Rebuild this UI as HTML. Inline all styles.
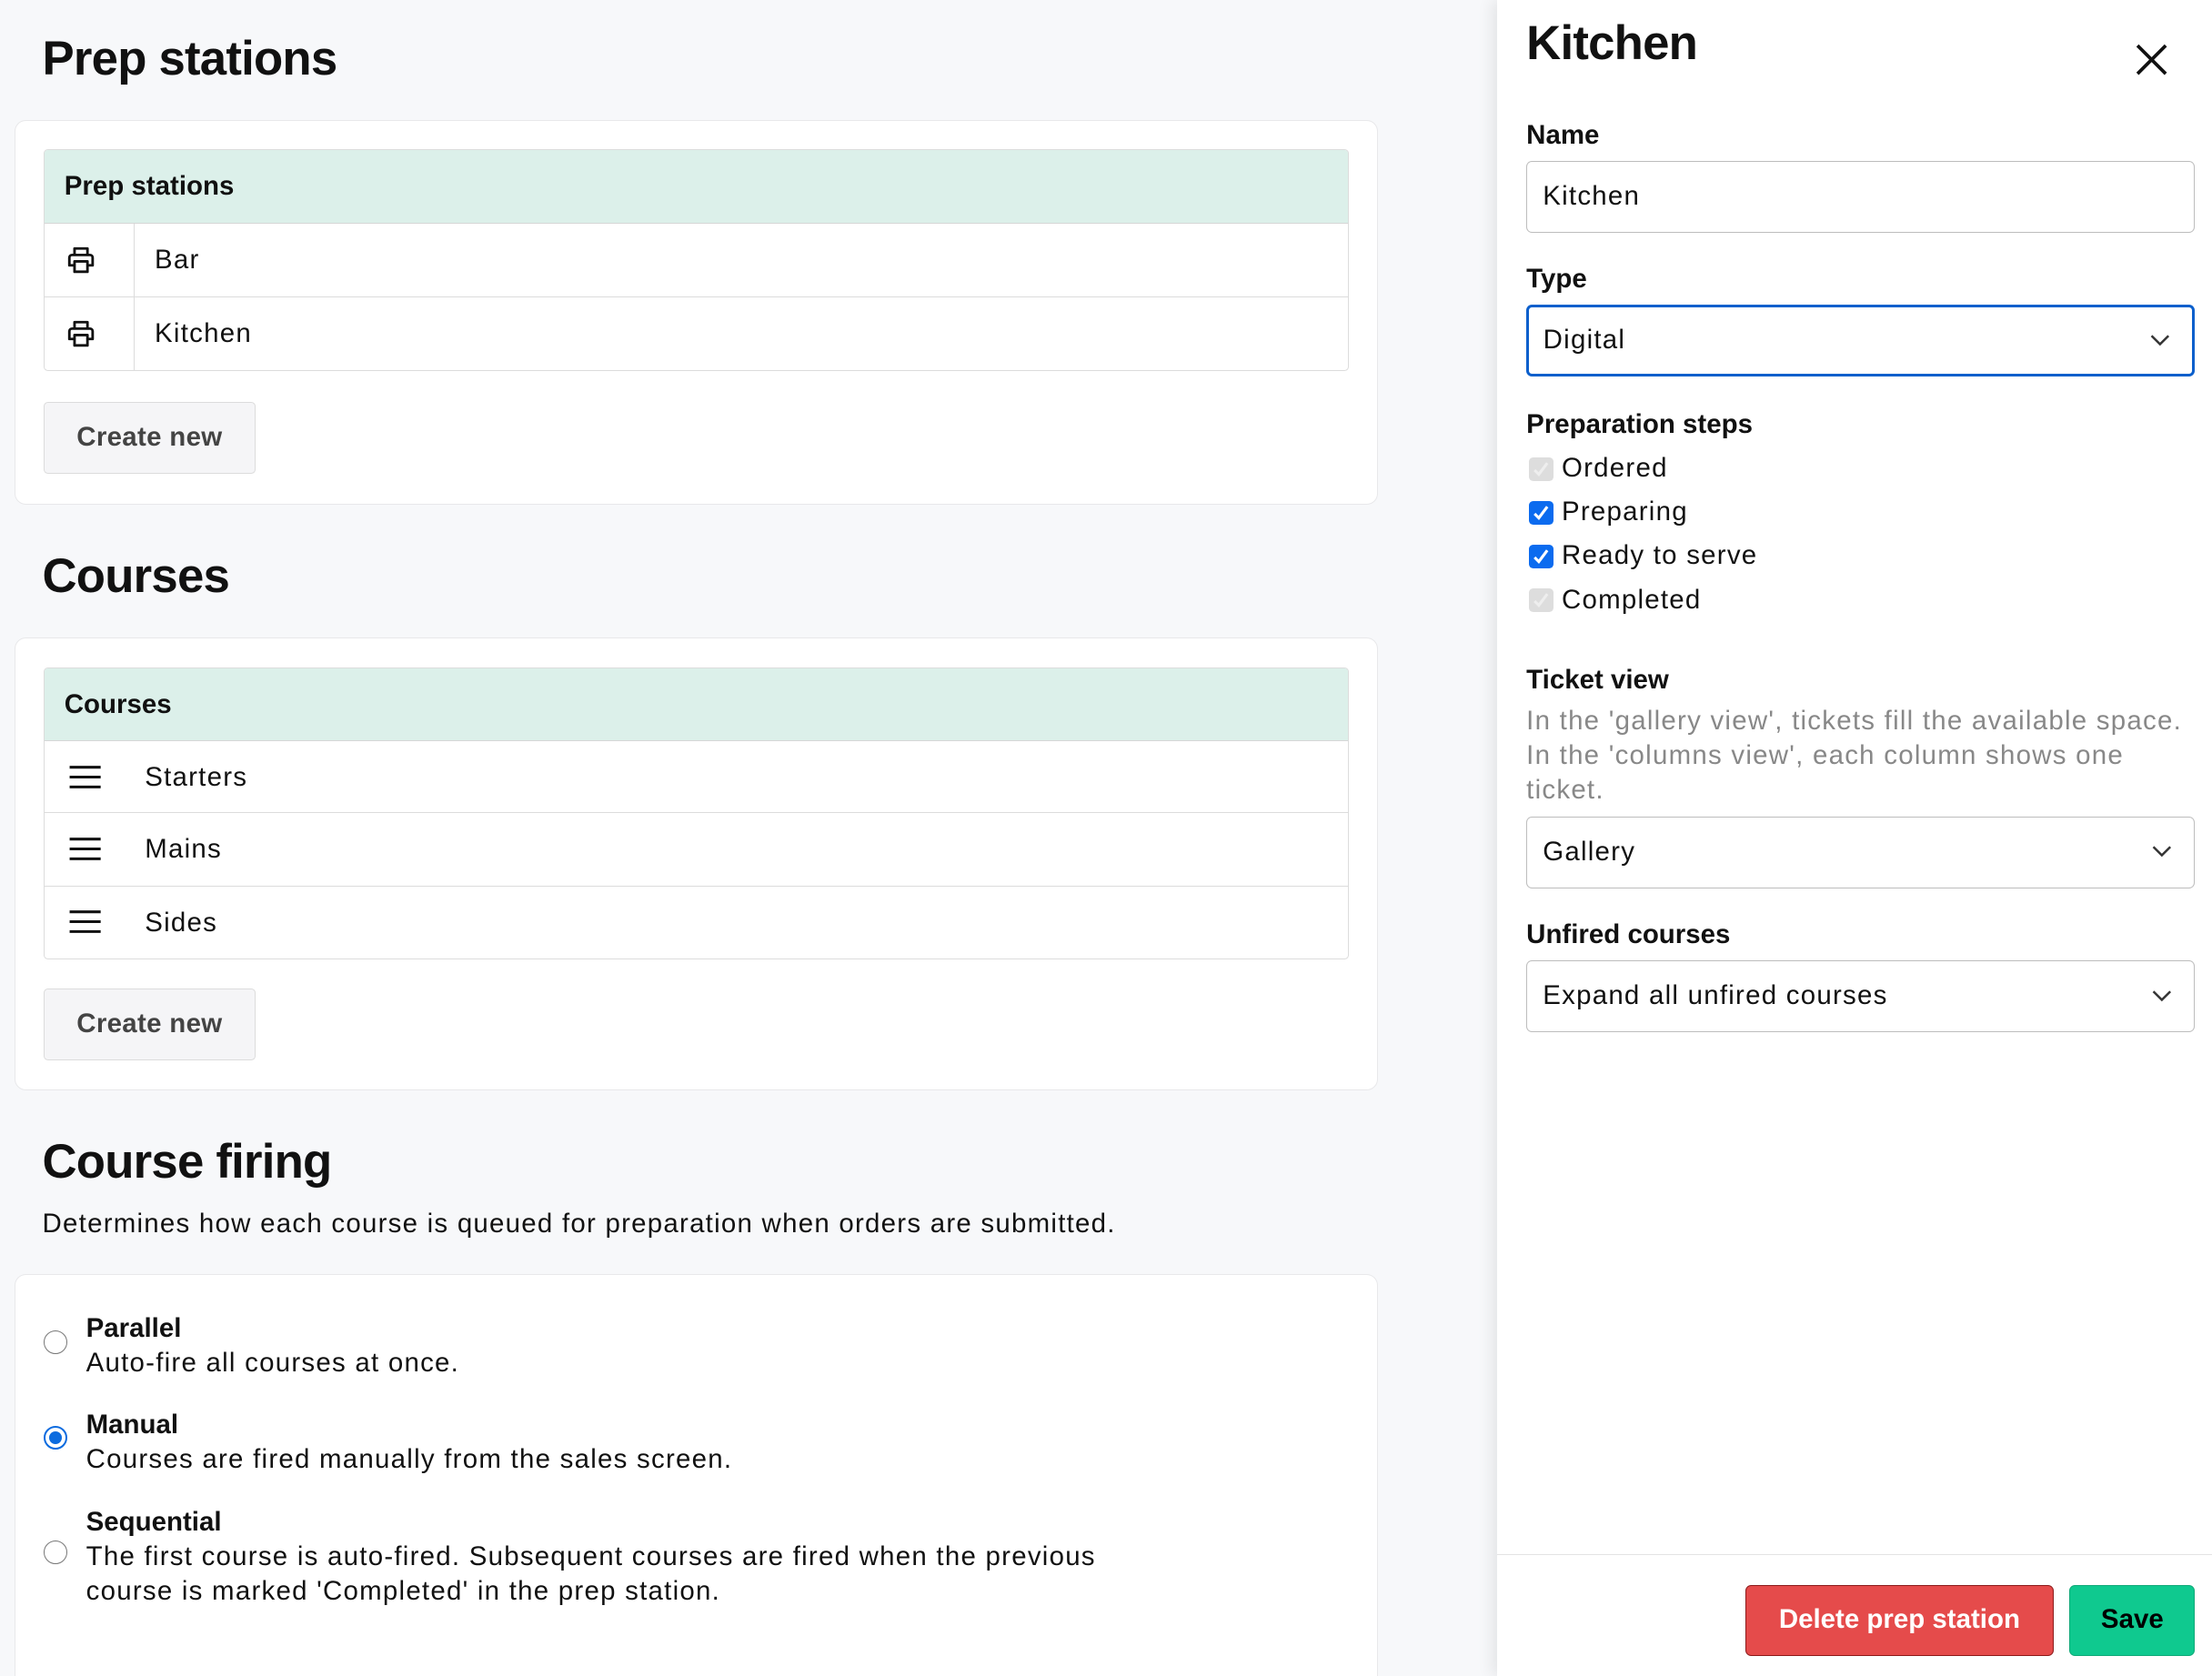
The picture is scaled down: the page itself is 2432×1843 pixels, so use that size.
<!DOCTYPE html>
<html><head><meta charset="utf-8">
<style>
html{zoom:1.551;overflow:hidden}
*{box-sizing:border-box;margin:0;padding:0}
body{width:1568px;height:1188px;overflow:hidden;background:#f7f8fa;font-family:"Liberation Sans",Arial,sans-serif;color:#111;position:relative;letter-spacing:0.8px}
b,.th,.lbl,h1,.btn,.bb{letter-spacing:0}
.abs{position:absolute}
h1{position:absolute;font-size:34px;font-weight:700;letter-spacing:-0.5px;color:#111}
.card{position:absolute;left:10px;width:967px;background:#fff;border:1px solid #e8e8ea;border-radius:8px}
.tbl{position:absolute;left:31px;width:925px;border:1px solid #dcdcdc;border-radius:3px;overflow:hidden;background:#fff}
.th{height:52px;background:#dcf0ea;font-weight:700;font-size:19px;line-height:52px;padding-left:14px;border-bottom:1px solid #d6d6d6}
.tr{height:52px;border-bottom:1px solid #dcdcdc;position:relative;font-size:19px;line-height:52px}
.tr:last-child{border-bottom:none}
.btn{position:absolute;left:31px;width:150px;height:51px;background:#f5f5f7;border:1px solid #dcdcdc;border-radius:3px;font-size:19px;font-weight:700;color:#444;text-align:center;line-height:49px;letter-spacing:0.2px}
.panel{position:absolute;left:1061px;top:0;width:507px;height:1188px;background:#fff;box-shadow:-4px 0 10px rgba(0,0,0,.08)}
.lbl{position:absolute;left:21px;font-size:19px;font-weight:700}
.inp{position:absolute;left:21px;width:474px;height:51px;border:1px solid #bdbdbd;border-radius:4px;font-size:19px;line-height:49px;padding-left:11px}
.chev{position:absolute;right:16px;top:17px}
.cb{position:absolute;left:23px;width:17px;height:17px;border-radius:3px}
.cbt{position:absolute;left:46px;font-size:19px;line-height:24px}
.radio{position:absolute;left:31px;width:17px;height:17px;border:1px solid #777;border-radius:50%;background:#fff}
.rt{position:absolute;left:61px;font-size:19px;line-height:24.5px}
</style></head><body>
<h1 style="left:30px;top:22px">Prep stations</h1>
<div class="card" style="top:85px;height:273px"></div>
<div class="tbl" style="top:106px">
 <div class="th">Prep stations</div>
 <div class="tr"><div class="abs" style="left:63px;top:0;bottom:0;border-left:1px solid #dcdcdc"></div>
 <svg class="abs" style="left:15px;top:15px" width="22" height="22" viewBox="0 0 24 24" fill="none" stroke="#111" stroke-width="2" stroke-linejoin="round"><path d="M7 8V3h10v5M5 8h14a2 2 0 0 1 2 2v6h-4M7 16H3v-6a2 2 0 0 1 2-2M7 13h10v8H7z"/></svg>
 <span class="abs" style="left:78px">Bar</span></div>
 <div class="tr"><div class="abs" style="left:63px;top:0;bottom:0;border-left:1px solid #dcdcdc"></div>
 <svg class="abs" style="left:15px;top:15px" width="22" height="22" viewBox="0 0 24 24" fill="none" stroke="#111" stroke-width="2" stroke-linejoin="round"><path d="M7 8V3h10v5M5 8h14a2 2 0 0 1 2 2v6h-4M7 16H3v-6a2 2 0 0 1 2-2M7 13h10v8H7z"/></svg>
 <span class="abs" style="left:78px">Kitchen</span></div>
</div>
<div class="btn" style="top:285px">Create new</div>

<h1 style="left:30px;top:389px">Courses</h1>
<div class="card" style="top:452px;height:321px"></div>
<div class="tbl" style="top:473px">
 <div class="th">Courses</div>
 <div class="tr" style="height:51px;line-height:51px"><svg class="abs" style="left:17px;top:15px" width="24" height="20" stroke="#111" stroke-width="2"><path d="M1 3h22M1 10h22M1 17h22"/></svg><span class="abs" style="left:71px">Starters</span></div>
 <div class="tr" style="height:52px"><svg class="abs" style="left:17px;top:15px" width="24" height="20" stroke="#111" stroke-width="2"><path d="M1 3h22M1 10h22M1 17h22"/></svg><span class="abs" style="left:71px">Mains</span></div>
 <div class="tr" style="height:51px;line-height:51px"><svg class="abs" style="left:17px;top:15px" width="24" height="20" stroke="#111" stroke-width="2"><path d="M1 3h22M1 10h22M1 17h22"/></svg><span class="abs" style="left:71px">Sides</span></div>
</div>
<div class="btn" style="top:701px">Create new</div>

<h1 style="left:30px;top:804px">Course firing</h1>
<div class="abs" style="left:30px;top:857px;font-size:19px">Determines how each course is queued for preparation when orders are submitted.</div>
<div class="card" style="top:903px;height:285px;border-bottom:none;border-radius:8px 8px 0 0"></div>
<div class="radio" style="top:943px"></div>
<div class="rt" style="top:930px"><b>Parallel</b><br>Auto-fire all courses at once.</div>
<div class="radio" style="top:1011px;border:1.5px solid #0b6bdf"><div class="abs" style="left:2.5px;top:2.5px;width:9px;height:9px;border-radius:50%;background:#0b6bdf"></div></div>
<div class="rt" style="top:998px"><b>Manual</b><br>Courses are fired manually from the sales screen.</div>
<div class="radio" style="top:1092px"></div>
<div class="rt" style="top:1067px"><b>Sequential</b><br>The first course is auto-fired. Subsequent courses are fired when the previous<br>course is marked 'Completed' in the prep station.</div>

<div class="panel">
 <div class="abs bb" style="left:21px;top:11px;font-size:34px;font-weight:700;letter-spacing:-0.5px">Kitchen</div>
 <svg class="abs" style="left:452px;top:30px" width="24" height="24" stroke="#111" stroke-width="2.4"><path d="M2 2l20 20M22 2L2 22"/></svg>
 <div class="lbl" style="top:85px">Name</div>
 <div class="inp" style="top:114px">Kitchen</div>
 <div class="lbl" style="top:187px">Type</div>
 <div class="inp" style="top:216px;border:2px solid #0b5fcc;line-height:47px;padding-left:10px">Digital<svg class="chev" width="14" height="14" fill="none" stroke="#333" stroke-width="1.6" style="top:16px"><path d="M1 4l6 6 6-6"/></svg></div>
 <div class="lbl" style="top:290px">Preparation steps</div>
 <div class="cb" style="top:324px;background:#ddd"><svg width="17" height="17" fill="none" stroke="#eee" stroke-width="2"><path d="M4 9l3 3 6-8"/></svg></div><div class="cbt" style="top:320px">Ordered</div>
 <div class="cb" style="top:355px;background:#0b6bef"><svg width="17" height="17" fill="none" stroke="#fff" stroke-width="2"><path d="M4 9l3 3 6-8"/></svg></div><div class="cbt" style="top:351px">Preparing</div>
 <div class="cb" style="top:386px;background:#0b6bef"><svg width="17" height="17" fill="none" stroke="#fff" stroke-width="2"><path d="M4 9l3 3 6-8"/></svg></div><div class="cbt" style="top:382px">Ready to serve</div>
 <div class="cb" style="top:417px;background:#ddd"><svg width="17" height="17" fill="none" stroke="#eee" stroke-width="2"><path d="M4 9l3 3 6-8"/></svg></div><div class="cbt" style="top:413px">Completed</div>
 <div class="lbl" style="top:471px">Ticket view</div>
 <div class="abs" style="left:21px;top:499px;width:490px;font-size:19px;line-height:24.5px;color:#888">In the 'gallery view', tickets fill the available space.<br>In the 'columns view', each column shows one<br>ticket.</div>
 <div class="inp" style="top:579px">Gallery<svg class="chev" width="14" height="14" fill="none" stroke="#333" stroke-width="1.6"><path d="M1 4l6 6 6-6"/></svg></div>
 <div class="lbl" style="top:652px">Unfired courses</div>
 <div class="inp" style="top:681px">Expand all unfired courses<svg class="chev" width="14" height="14" fill="none" stroke="#333" stroke-width="1.6"><path d="M1 4l6 6 6-6"/></svg></div>
 <div class="abs" style="left:0;right:0;top:1102px;border-top:1px solid #e3e3e3"></div>
 <div class="abs bb" style="left:176px;top:1124px;width:219px;height:50px;background:#e54b4b;border:1px solid #8c1a1a;border-radius:4px;color:#fff;font-weight:700;font-size:19px;text-align:center;line-height:48px">Delete prep station</div>
 <div class="abs bb" style="left:406px;top:1124px;width:89px;height:50px;background:#0fc98f;border:1px solid #10a878;border-radius:4px;color:#000;font-weight:700;font-size:19px;text-align:center;line-height:48px">Save</div>
</div>
</body></html>
